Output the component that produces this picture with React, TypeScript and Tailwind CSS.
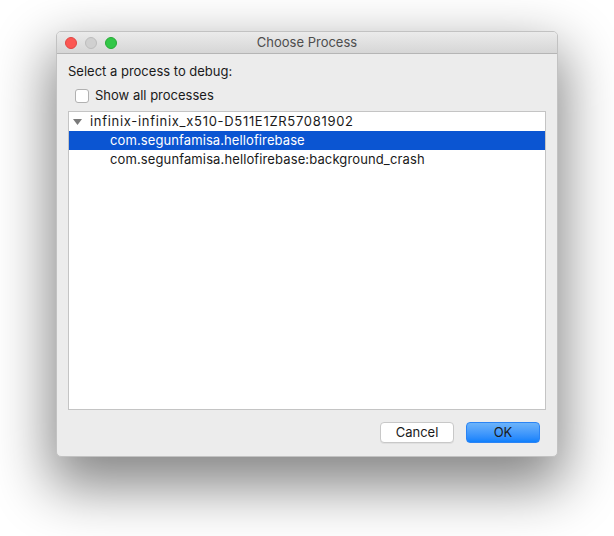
import React from "react";

export default function App() {
  const font = { fontFamily: "Inter, 'Liberation Sans', sans-serif" };
  return (
    <div className="w-[614px] h-[536px] bg-white pt-[31px] pl-[56px]" style={font}>
      <div className="w-[502px] h-[426px] rounded-[5px] bg-[#ececec] border border-[#c2c2c2] shadow-[0_24px_55px_6px_rgba(0,0,0,0.48)] flex flex-col overflow-hidden">
        <div className="h-[22px] flex items-center relative bg-gradient-to-b from-[#ebebeb] to-[#d6d6d6] border-b border-[#b5b5b5] shrink-0">
          <div className="flex items-center gap-[8px] pl-[8px]">
            <div className="w-[12px] h-[12px] rounded-full bg-[#fc5753] border border-[#df4744]" />
            <div className="w-[12px] h-[12px] rounded-full bg-[#d0d0d0] border border-[#bdbdbd]" />
            <div className="w-[12px] h-[12px] rounded-full bg-[#33c748] border border-[#27aa35]" />
          </div>
          <div className="absolute inset-0 flex items-center justify-center pt-[1px] text-[13px] text-[#4d4d4d]">
            Choose Process
          </div>
        </div>
        <div className="flex-1 flex flex-col px-[11px] pt-[9px]">
          <div className="text-[13px] text-[#1a1a1a] leading-[16px]">Select a process to debug:</div>
          <div className="flex items-center gap-[6px] mt-[9px] ml-[7px] h-[16px]">
            <div className="w-[14px] h-[14px] rounded-[3px] bg-white border border-[#b1b1b1]" />
            <span className="text-[13px] text-[#1a1a1a]">Show all processes</span>
          </div>
          <div className="mt-[7px] w-[478px] h-[299px] bg-white border border-[#c4c4c4] flex flex-col">
            <div className="h-[19px] flex items-center text-[13px] text-[#1a1a1a]">
              <svg width="9" height="8" viewBox="0 0 9 8" className="ml-[4px] mr-[8px]">
                <polygon points="0,1 9,1 4.5,7" fill="#7a7a7a" />
              </svg>
              <span className="tracking-[0.7px]">infinix-infinix_x510-D511E1ZR57081902</span>
            </div>
            <div className="h-[19px] flex items-center bg-[#0b55d2] text-white text-[13px] pl-[41px] tracking-[0.1px]">
              com.segunfamisa.hellofirebase
            </div>
            <div className="h-[19px] flex items-center text-[#1a1a1a] text-[13px] pl-[41px] tracking-[0.12px]">
              com.segunfamisa.hellofirebase:background_crash
            </div>
          </div>
          <div className="flex justify-end gap-[12px] mt-[12px] pr-[6px]">
            <div className="w-[74px] h-[21px] rounded-[4px] bg-white border border-[#c8c8c8] shadow-[0_1px_0_rgba(0,0,0,0.05)] flex items-center justify-center text-[13px] text-[#1a1a1a] pt-[1px]">
              Cancel
            </div>
            <div className="w-[74px] h-[21px] rounded-[4px] bg-gradient-to-b from-[#6cb3fa] to-[#0d80fc] border border-[#2a84f5] flex items-center justify-center text-[13px] text-[#1a1a1a] pt-[1px]">
              OK
            </div>
          </div>
        </div>
      </div>
    </div>
  );
}
